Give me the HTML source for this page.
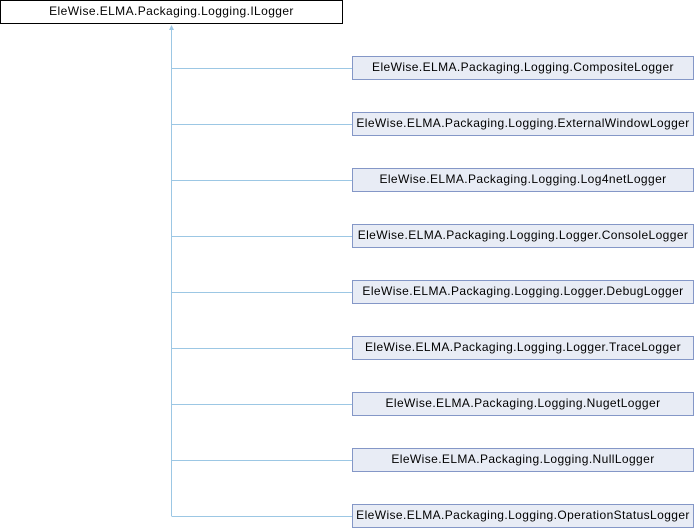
<!DOCTYPE html>
<html><head><style>
body{margin:0;width:694px;height:528px;background:#fff;position:relative;overflow:hidden;font-family:"Liberation Sans",sans-serif;font-size:12px;letter-spacing:0.4px;}
.b{position:absolute;box-sizing:border-box;height:24px;line-height:21px;text-align:center;white-space:nowrap;color:#000;}
.c{left:352px;width:342px;background:#e8ecf5;border:1px solid #8497c7;}
</style></head><body>
<svg width="694" height="528" style="position:absolute;left:0;top:0">
<g stroke="#9cc7e4" stroke-width="1" fill="none">
<line x1="171.5" y1="29" x2="171.5" y2="516"/>
<line x1="171.5" y1="68.5" x2="352" y2="68.5"/>
<line x1="171.5" y1="124.5" x2="352" y2="124.5"/>
<line x1="171.5" y1="180.5" x2="352" y2="180.5"/>
<line x1="171.5" y1="236.5" x2="352" y2="236.5"/>
<line x1="171.5" y1="292.5" x2="352" y2="292.5"/>
<line x1="171.5" y1="348.5" x2="352" y2="348.5"/>
<line x1="171.5" y1="404.5" x2="352" y2="404.5"/>
<line x1="171.5" y1="460.5" x2="352" y2="460.5"/>
<line x1="171.5" y1="516.5" x2="352" y2="516.5"/>
</g>
<polygon points="171.5,25 169,30 174,30" fill="#9cc7e4"/>
</svg>
<div class="b" style="left:0;top:0;width:343px;border:1px solid #000;background:#fff">EleWise.ELMA.Packaging.Logging.ILogger</div>
<div class="b c" style="top:56px">EleWise.ELMA.Packaging.Logging.CompositeLogger</div>
<div class="b c" style="top:112px">EleWise.ELMA.Packaging.Logging.ExternalWindowLogger</div>
<div class="b c" style="top:168px">EleWise.ELMA.Packaging.Logging.Log4netLogger</div>
<div class="b c" style="top:224px">EleWise.ELMA.Packaging.Logging.Logger.ConsoleLogger</div>
<div class="b c" style="top:280px">EleWise.ELMA.Packaging.Logging.Logger.DebugLogger</div>
<div class="b c" style="top:336px">EleWise.ELMA.Packaging.Logging.Logger.TraceLogger</div>
<div class="b c" style="top:392px">EleWise.ELMA.Packaging.Logging.NugetLogger</div>
<div class="b c" style="top:448px">EleWise.ELMA.Packaging.Logging.NullLogger</div>
<div class="b c" style="top:504px">EleWise.ELMA.Packaging.Logging.OperationStatusLogger</div>
</body></html>
